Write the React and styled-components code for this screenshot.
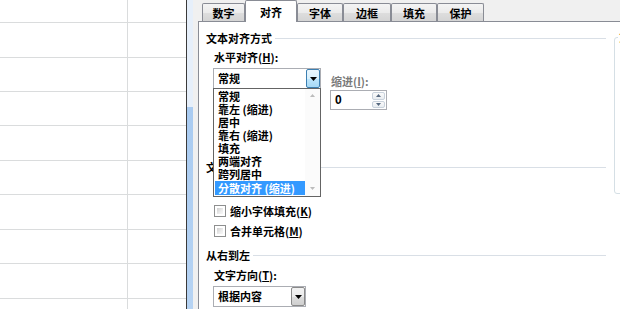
import React from "react";
import styled, { createGlobalStyle } from "styled-components";

const GlobalStyle = createGlobalStyle`
  html, body {
    margin: 0;
    padding: 0;
    background: #fff;
    overflow: hidden;
  }
  body {
    font-family: "Noto Sans CJK SC", "Noto Sans", sans-serif;
    font-size: 11px;
    color: #000;
  }
`;

const Screen = styled.div`
  display: flex;
  width: 620px;
  height: 309px;
  overflow: hidden;
`;

/* ---------- spreadsheet behind the dialog ---------- */

const Sheet = styled.div`
  width: 186px;
  flex-shrink: 0;
  background: #fff;
`;

const SheetRow = styled.div`
  display: flex;
  box-sizing: border-box;
  height: ${(p) => p.h}px;
  border-bottom: 1px solid #dadcdd;
`;

const Cell = styled.div`
  box-sizing: border-box;
  width: ${(p) => (p.w ? `${p.w}px` : "auto")};
  flex: ${(p) => (p.w ? "none" : 1)};
  border-right: ${(p) => (p.w ? "1px solid #dadcdd" : "none")};
`;

const WindowEdge = styled.div`
  box-sizing: border-box;
  width: 7px;
  flex-shrink: 0;
  border-left: 1px solid #3a3a3a;
  background: linear-gradient(
    to bottom,
    #e6effa 0,
    #e6effa 107px,
    #a9cbf1 107px,
    #b6d3f3 100%
  );
`;

/* ---------- dialog ---------- */

const Dialog = styled.div`
  flex: 1;
  display: flex;
  flex-direction: column;
  background: #f0f0f0;
  padding-left: 5px;
  min-width: 0;
`;

const TabBar = styled.div`
  position: relative;
  z-index: 2;
  display: flex;
  align-items: flex-end;
  height: 21px;
  padding-left: 4px;
`;

const Tab = styled.div`
  box-sizing: border-box;
  display: flex;
  align-items: center;
  justify-content: center;
  width: ${(p) => p.w}px;
  height: ${(p) => (p.active ? 22 : 18)}px;
  margin-bottom: ${(p) => (p.active ? -1 : 0)}px;
  padding-top: ${(p) => (p.active ? 1 : 0)}px;
  border: 1px solid #898c95;
  border-bottom: none;
  border-radius: 2px 2px 0 0;
  background: ${(p) =>
    p.active
      ? "#fff"
      : "linear-gradient(to bottom, #f4f4f4 0%, #ebebeb 50%, #dedede 51%, #d4d4d4 100%)"};
  font-weight: 700;
  font-size: 11px;
  line-height: 14px;
`;

const Panel = styled.div`
  flex: 1;
  display: flex;
  align-items: flex-start;
  background: #fff;
  border-top: 1px solid #898c95;
  border-left: 1px solid #898c95;
  padding-left: 7px;
  overflow: hidden;
`;

const MainCol = styled.div`
  width: 400px;
  flex-shrink: 0;
  padding-top: 9px;
  display: flex;
  flex-direction: column;
`;

const SectionHead = styled.div`
  display: flex;
  align-items: center;
  height: 14px;
  margin-top: ${(p) => p.mt || 0}px;
  font-weight: 700;
  line-height: 14px;
  white-space: nowrap;

  &::after {
    content: "";
    flex: 1;
    height: 1px;
    margin-left: 3px;
    background: #d9dfe6;
  }
`;

const Indent = styled.div`
  padding-left: 7px;
  display: flex;
  flex-direction: column;
`;

const FieldLabel = styled.div`
  height: 14px;
  line-height: 14px;
  margin-top: ${(p) => p.mt || 0}px;
  padding-left: 1px;
  font-weight: 700;
  color: ${(p) => (p.disabled ? "#7a7a7a" : "#000")};
  white-space: nowrap;
`;

const FieldRow = styled.div`
  display: flex;
  align-items: flex-start;
  margin-top: ${(p) => p.mt || 0}px;
`;

const ComboWrap = styled.div`
  position: relative;
  margin-top: ${(p) => p.mt || 0}px;
`;

const Combo = styled.div`
  box-sizing: border-box;
  display: flex;
  width: ${(p) => p.w}px;
  height: 21px;
  border: 1px solid #abadb3;
  background: #fff;
`;

const ComboText = styled.div`
  flex: 1;
  padding-left: 4px;
  line-height: 19px;
  font-weight: 700;
  white-space: nowrap;
`;

const DropButton = styled.div`
  box-sizing: border-box;
  width: 14px;
  display: flex;
  align-items: center;
  justify-content: center;
  border: 1px solid ${(p) => (p.hot ? "#3c7fb1" : "#8a8a8a")};
  border-radius: 2px;
  background: ${(p) =>
    p.hot
      ? "linear-gradient(to bottom, #eaf6fd 0%, #d9f0fc 50%, #bee6fd 51%, #a7d9f5 100%)"
      : "linear-gradient(to bottom, #f2f2f2 0%, #ebebeb 50%, #dddddd 51%, #cfcfcf 100%)"};
`;

const PopupList = styled.div`
  position: absolute;
  z-index: 5;
  top: 20px;
  left: 0;
  box-sizing: border-box;
  width: 108px;
  height: 109px;
  display: flex;
  border: 1px solid #646464;
  background: #fff;
`;

const Options = styled.div`
  flex: 1;
  padding: 1px 0 0 1px;
`;

const Option = styled.div`
  height: ${(p) => (p.selected ? 14 : 13)}px;
  line-height: ${(p) => (p.selected ? 14 : 13)}px;
  padding-left: 3px;
  font-weight: 700;
  white-space: nowrap;
  background: ${(p) => (p.selected ? "#3399ff" : "transparent")};
  color: ${(p) => (p.selected ? "#fff" : "#000")};
`;

const ScrollTrack = styled.div`
  width: 15px;
  display: flex;
  flex-direction: column;
  justify-content: space-between;
  align-items: center;
  padding: 5px 0 6px;
  background: #fbfbfb;
`;

const IndentCol = styled.div`
  display: flex;
  flex-direction: column;
  margin-left: 9px;
  padding-top: 6px;
`;

const Spin = styled.div`
  box-sizing: border-box;
  display: flex;
  width: 57px;
  height: 20px;
  margin-top: 2px;
  border: 1px solid #abadb3;
  background: #fff;
`;

const SpinValue = styled.div`
  flex: 1;
  padding-left: 4px;
  line-height: 18px;
  font-family: "Liberation Sans", "Noto Sans", sans-serif;
  font-weight: 700;
  font-size: 12px;
`;

const SpinButtons = styled.div`
  width: 13px;
  display: flex;
  flex-direction: column;
  gap: 1px;
  padding: 1px 1px 1px 0;
`;

const SpinButton = styled.div`
  flex: 1;
  display: flex;
  align-items: center;
  justify-content: center;
  border: 1px solid #c9d2dc;
  border-radius: 2px;
  background: linear-gradient(to bottom, #fafafa, #e9edf1);
`;

const CheckList = styled.div`
  display: flex;
  flex-direction: column;
  margin-top: ${(p) => p.mt || 0}px;
  padding-left: 8px;
`;

const CheckRow = styled.div`
  display: flex;
  align-items: center;
  gap: 4px;
  height: 20px;
  font-weight: 700;
  white-space: nowrap;
`;

const CheckBox = styled.div`
  box-sizing: border-box;
  width: 12px;
  height: 12px;
  padding: 2px;
  border: 1px solid #8e8f8f;
  background: #fff;

  &::before {
    content: "";
    display: block;
    width: 100%;
    height: 100%;
    background: linear-gradient(135deg, #cfcfcf 0%, #ececec 60%, #f8f8f8 100%);
  }
`;

const GroupBox = styled.div`
  position: relative;
  flex-shrink: 0;
  box-sizing: border-box;
  width: 120px;
  height: 157px;
  margin: 15px 0 0 8px;
  border: 1px solid #d5dfe5;
  border-radius: 3px;
`;

const GroupTitle = styled.span`
  position: absolute;
  top: -8px;
  left: 3px;
  padding: 0 1px;
  background: #fff;
  color: #c4782c;
  font-weight: 700;
  line-height: 14px;
`;

const Triangle = ({ dir = "down", color = "#000", w = 7, h = 4 }) => (
  <svg width={w} height={h} viewBox={`0 0 ${w} ${h}`}>
    <polygon
      points={
        dir === "down"
          ? `0,0 ${w},0 ${w / 2},${h}`
          : `0,${h} ${w},${h} ${w / 2},0`
      }
      fill={color}
    />
  </svg>
);

const sheetRows = [23, 35, 34, 34, 35, 34, 35, 34, 35, 20];

const tabs = [
  { label: "数字", w: 43 },
  { label: "对齐", w: 52, active: true },
  { label: "字体", w: 46 },
  { label: "边框", w: 48 },
  { label: "填充", w: 46 },
  { label: "保护", w: 47 },
];

const hAlignOptions = [
  "常规",
  "靠左 (缩进)",
  "居中",
  "靠右 (缩进)",
  "填充",
  "两端对齐",
  "跨列居中",
  "分散对齐 (缩进)",
];

// the first row of this group sits under the open list in the screenshot
const checks = [
  ["缩小字体填充(", "K", ")"],
  ["合并单元格(", "M", ")"],
];

export default function App() {
  return (
    <>
      <GlobalStyle />
      <Screen>
        <Sheet>
          {sheetRows.map((h, i) => (
            <SheetRow key={i} h={h}>
              <Cell w={128} />
              <Cell />
            </SheetRow>
          ))}
        </Sheet>
        <WindowEdge />
        <Dialog>
          <TabBar>
            {tabs.map((t) => (
              <Tab key={t.label} w={t.w} active={t.active}>
                {t.label}
              </Tab>
            ))}
          </TabBar>
          <Panel>
            <MainCol>
              <SectionHead>文本对齐方式</SectionHead>
              <Indent>
                <FieldLabel mt={5}>
                  水平对齐(<u>H</u>):
                </FieldLabel>
                <FieldRow mt={4}>
                  <ComboWrap>
                    <Combo w={108}>
                      <ComboText>常规</ComboText>
                      <DropButton hot>
                        <Triangle />
                      </DropButton>
                    </Combo>
                    <PopupList>
                      <Options>
                        {hAlignOptions.map((o, i) => (
                          <Option key={o} selected={i === hAlignOptions.length - 1}>
                            {o}
                          </Option>
                        ))}
                      </Options>
                      <ScrollTrack>
                        <Triangle dir="up" color="#bcbcbc" w={5} h={3} />
                        <Triangle dir="down" color="#bcbcbc" w={5} h={3} />
                      </ScrollTrack>
                    </PopupList>
                  </ComboWrap>
                  <IndentCol>
                    <FieldLabel disabled>
                      缩进(<u>I</u>):
                    </FieldLabel>
                    <Spin>
                      <SpinValue>0</SpinValue>
                      <SpinButtons>
                        <SpinButton>
                          <Triangle dir="up" color="#56687f" w={5} h={3} />
                        </SpinButton>
                        <SpinButton>
                          <Triangle dir="down" color="#56687f" w={5} h={3} />
                        </SpinButton>
                      </SpinButtons>
                    </Spin>
                  </IndentCol>
                </FieldRow>
              </Indent>

              <SectionHead mt={50}>文本控制</SectionHead>
              <CheckList mt={27}>
                {checks.map(([a, k, b]) => (
                  <CheckRow key={k}>
                    <CheckBox />
                    <span>
                      {a}
                      <u>{k}</u>
                      {b}
                    </span>
                  </CheckRow>
                ))}
              </CheckList>

              <SectionHead mt={7}>从右到左</SectionHead>
              <Indent>
                <FieldLabel mt={6}>
                  文字方向(<u>T</u>):
                </FieldLabel>
                <ComboWrap mt={4}>
                  <Combo w={93}>
                    <ComboText>根据内容</ComboText>
                    <DropButton>
                      <Triangle />
                    </DropButton>
                  </Combo>
                </ComboWrap>
              </Indent>
            </MainCol>
            <GroupBox>
              <GroupTitle>方向</GroupTitle>
            </GroupBox>
          </Panel>
        </Dialog>
      </Screen>
    </>
  );
}
